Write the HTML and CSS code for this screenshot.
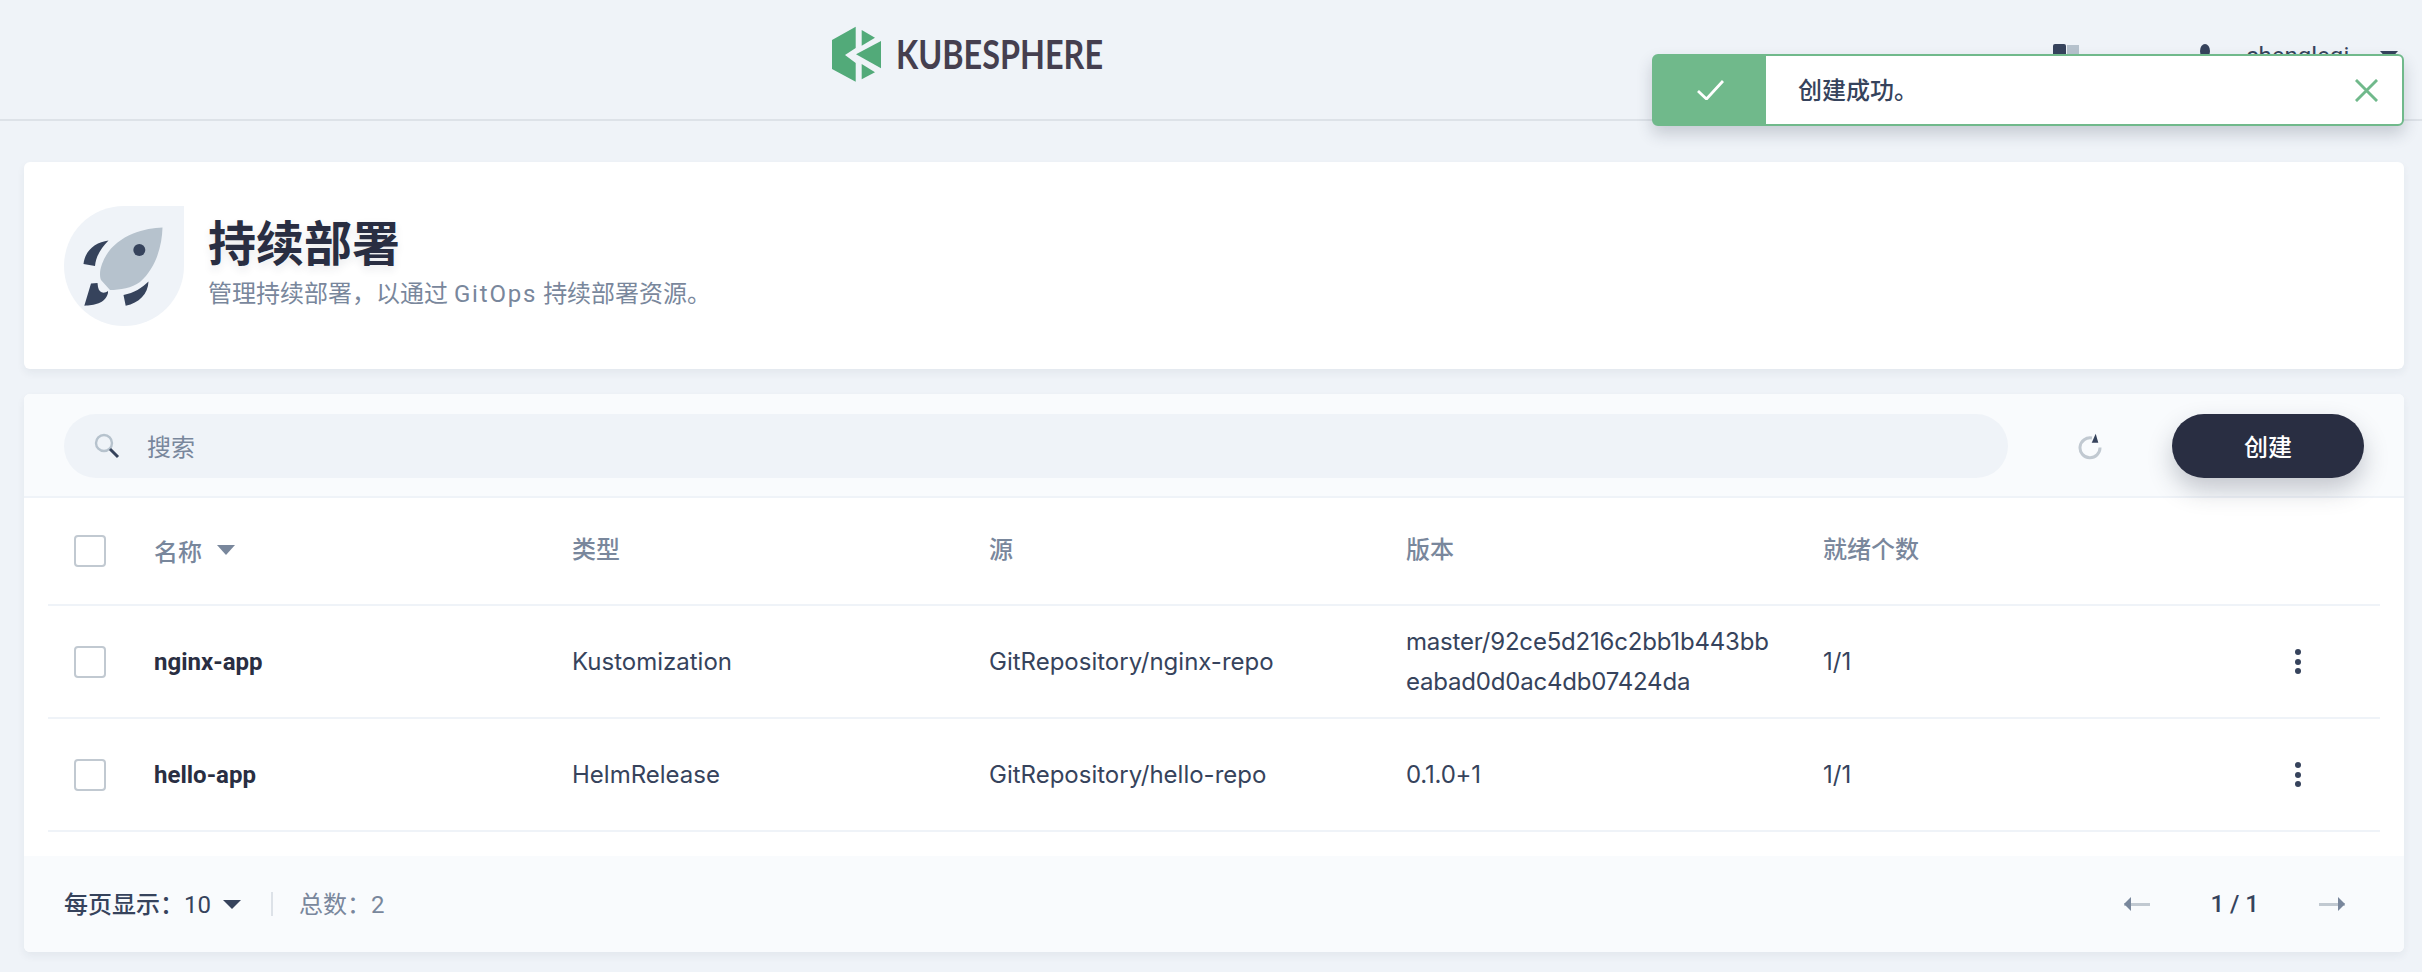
FILE: index.html
```html
<html>

<head>
  <title>KubeSphere</title>
  <meta name="viewport" content="width=device-width, initial-scale=1">
  <link rel="stylesheet" href="styles.css">
</head>

<body>
  <div class="header">
    <div class="logo">
      <svg class="logo-mark" viewBox="12 11 50 56" width="50" height="56">
        <polygon points="35.7,11.7 12,25 12,54 35.7,66.7 35.7,48 25,40 35.7,33" />
        <polygon points="41.7,15 55,22.7 41.7,30.7" />
        <polygon points="61,26 61,53.3 36,39.3" />
        <polygon points="41.7,49 55,57.3 41.7,64.3" />
      </svg>
      <span class="logo-text">KUBESPHERE</span>
    </div>
    <div class="header-right">
      <svg class="book-icon" viewBox="0 0 26 24" width="26" height="24">
        <rect x="0" y="0" width="13" height="24" rx="2" fill="#36435c" />
        <rect x="14" y="1" width="12" height="23" fill="#b6c2cd" />
      </svg>
      <svg class="user-icon" viewBox="0 0 12 24" width="12" height="24">
        <ellipse cx="6" cy="7" rx="5" ry="7" fill="#36435c" />
      </svg>
      <span class="username">chengleqi</span>
      <span class="caret caret-user"></span>
    </div>
  </div>

  <div class="toast">
    <div class="toast-icon">
      <svg viewBox="0 0 27 20" width="27" height="20">
        <path d="M1 11 L9.5 19 L26 1" fill="none" stroke="#fff" stroke-width="2.8" />
      </svg>
    </div>
    <div class="toast-text">创建成功。</div>
    <svg class="toast-close" viewBox="0 0 24 24" width="23" height="23">
      <path d="M1 1 L23 23 M23 1 L1 23" fill="none" stroke="#70b98b" stroke-width="3" />
    </svg>
  </div>

  <div class="main">
    <!-- Title card -->
    <div class="card banner">
      <div class="banner-icon">
        <svg viewBox="0 0 120 120" width="120" height="120">
          <path d="M98.5 21.5 C80 22 48 30 38 58 C35 66 36 72 37 74 L46 84 C56 84 68 82 76 76 C92 62 98 40 98.5 21.5 Z" fill="#b6c2cd" />
          <circle cx="75.3" cy="44" r="6" fill="#36435c" />
          <path d="M44.5 34.5 C32 36 21 44 19.5 58 L31 60 C32 50 37 42 44.5 34.5 Z" fill="#36435c" />
          <path d="M84.5 75.5 C78 82 70 87 59.5 89 L61.7 99.7 C75 97 84 88 84.5 75.5 Z" fill="#36435c" />
          <path d="M27 77.5 L20.3 99.7 C30 99 41 98 44 87 L44 85 C40 88 35 87 34 81 L33.5 77 Z" fill="#36435c" />
        </svg>
      </div>
      <div class="banner-text">
        <div class="banner-title">持续部署</div>
        <div class="banner-desc">管理持续部署，以通过 <span class="desc-latin">GitOps</span> 持续部署资源。</div>
      </div>
    </div>

    <!-- List card -->
    <div class="card list">
      <div class="toolbar">
        <div class="search">
          <svg viewBox="0 0 26 26" width="26" height="26">
            <circle cx="10" cy="10" r="8" fill="none" stroke="#b6c2cd" stroke-width="2.4" />
            <path d="M16 16 L24 24" stroke="#36435c" stroke-width="3" />
          </svg>
          <span class="search-text">搜索</span>
        </div>
        <svg class="refresh" viewBox="0 0 24 28" width="24" height="28">
          <path d="M14 6 A10 10 0 1 0 22 15.5" fill="none" stroke="#c1c9d1" stroke-width="3" />
          <path d="M13.7 10.7 L17.7 1.7 L20.3 10.7 Z" fill="#36435c" />
        </svg>
        <button class="button">创建</button>
      </div>

      <div class="row row-head">
        <div class="col-check"><span class="checkbox"></span></div>
        <div class="col-name">名称 <span class="caret caret-sort"></span></div>
        <div class="col">类型</div>
        <div class="col">源</div>
        <div class="col">版本</div>
        <div class="col">就绪个数</div>
      </div>

      <div class="row">
        <div class="col-check"><span class="checkbox"></span></div>
        <div class="col-name name">nginx-app</div>
        <div class="col">Kustomization</div>
        <div class="col">GitRepository/nginx-repo</div>
        <div class="col version">master/92ce5d216c2bb1b443bbeabad0d0ac4db07424da</div>
        <div class="col">1/1</div>
        <div class="dots"><i></i><i></i><i></i></div>
      </div>

      <div class="row">
        <div class="col-check"><span class="checkbox"></span></div>
        <div class="col-name name">hello-app</div>
        <div class="col">HelmRelease</div>
        <div class="col">GitRepository/hello-repo</div>
        <div class="col version">0.1.0+1</div>
        <div class="col">1/1</div>
        <div class="dots"><i></i><i></i><i></i></div>
      </div>

      <div class="footer">
        <span class="page-size">每页显示：<span class="page-size-num">10</span></span>
        <span class="caret caret-page"></span>
        <span class="sep"></span>
        <span class="total">总数：2</span>
        <div class="pager">
          <span class="arrow arrow-left"></span>
          <span class="page-num">1 / 1</span>
          <span class="arrow arrow-right"></span>
        </div>
      </div>
    </div>
  </div>
</body>

</html>
```

FILE: styles.css
```css
body {
  font-family: Roboto, "Noto Sans CJK SC", sans-serif;
  font-size: 24px;
  color: #292e42;
  background-color: #eff3f8;
  margin: 0;
  height: 972px;
  overflow: hidden;
}

.header {
  height: 119px;
  border-bottom: 2px solid #dde2e8;
  display: flex;
  align-items: flex-start;
  justify-content: space-between;
  padding: 0 24px 0 832px;
}

.logo {
  display: flex;
  align-items: center;
  gap: 14px;
  margin-top: 26px;
}

.logo-mark {
  fill: #52aa79;
}

.logo-text {
  font-family: Lato, sans-serif;
  font-size: 41px;
  font-weight: 700;
  line-height: 56px;
  color: #453f4f;
  transform: scaleX(0.79);
  transform-origin: left center;
}

.header-right {
  display: flex;
  align-items: center;
  margin-top: 42px;
}

.book-icon {
  margin-right: 120px;
}

.user-icon {
  margin-right: 35px;
}

.username {
  color: #36435c;
  width: 134px;
}

.caret {
  display: inline-block;
  width: 0;
  height: 0;
  border-style: solid;
  border-color: #36435c transparent transparent transparent;
}

.caret-user {
  border-width: 10px 9px 0 9px;
}

.toast {
  position: absolute;
  left: 1652px;
  top: 54px;
  width: 752px;
  height: 72px;
  box-sizing: border-box;
  border: 2px solid #70b98b;
  border-radius: 6px;
  background-color: #fff;
  display: flex;
  align-items: center;
  box-shadow: 0 8px 16px rgba(36, 46, 66, 0.2);
}

.toast-icon {
  width: 112px;
  height: 100%;
  background-color: #70b98b;
  display: flex;
  align-items: center;
  justify-content: center;
}

.toast-text {
  flex: 1;
  padding-left: 32px;
  margin-top: -3px;
  color: #36435c;
  font-weight: 500;
}

.toast-close {
  margin-right: 24px;
}

.main {
  padding: 41px 18px 0 24px;
}

.card {
  background-color: #fff;
  border-radius: 6px;
  box-shadow: 0 4px 8px rgba(36, 46, 66, 0.06);
}

.banner {
  height: 207px;
  display: flex;
  align-items: center;
  padding-left: 40px;
  gap: 24px;
  margin-bottom: 25px;
}

.banner-icon {
  width: 120px;
  height: 120px;
  background-color: #eff3f8;
  border-radius: 50% 0 50% 50%;
}

.banner-text {
  margin-bottom: 10px;
}

.banner-title {
  font-size: 48px;
  font-weight: 700;
  line-height: 66px;
  margin-bottom: 1px;
  text-shadow: 0 4px 8px rgba(36, 46, 66, 0.1);
}

.banner-desc {
  line-height: 30px;
  color: #79879c;
}

.desc-latin {
  letter-spacing: 1.8px;
}

.toolbar {
  height: 100px;
  padding: 2px 40px 0 40px;
  border-bottom: 2px solid #eff3f8;
  background-color: #f9fbfd;
  border-radius: 6px 6px 0 0;
  display: flex;
  align-items: center;
}

.search {
  flex: 1;
  height: 64px;
  background-color: #eff3f8;
  border-radius: 32px;
  display: flex;
  align-items: center;
  padding-left: 30px;
  gap: 27px;
  color: #79879c;
}

.search-text {
  padding-bottom: 2px;
}

.refresh {
  margin: 0 70px 0 70px;
}

.button {
  width: 192px;
  height: 64px;
  padding: 0 0 2px 0;
  border: none;
  border-radius: 32px;
  background-color: #292e42;
  color: #fff;
  font-family: inherit;
  font-size: 24px;
  font-weight: 500;
  box-shadow: 0 12px 24px rgba(41, 46, 66, 0.25);
}

.row {
  display: flex;
  align-items: center;
  height: 111px;
  margin: 0 24px;
  border-bottom: 2px solid #eff3f8;
}

.row-head {
  height: 106px;
  color: #79879c;
  font-weight: 500;
}

.row-head .col,
.row-head .col-name {
  padding-bottom: 2px;
}

.col-check {
  width: 106px;
  padding-left: 26px;
  box-sizing: border-box;
  display: flex;
}

.checkbox {
  width: 28px;
  height: 28px;
  border: 2px solid #c1c9d1;
  border-radius: 4px;
  background-color: #fff;
}

.col-name {
  width: 418px;
  display: flex;
  align-items: center;
  gap: 15px;
}

.name {
  font-weight: 700;
}

.col {
  width: 417px;
  font-family: Inter, "Noto Sans CJK SC", sans-serif;
  line-height: 40px;
  color: #36435c;
}

.row-head .col {
  color: #79879c;
}

.version {
  width: 368px;
  margin-right: 49px;
  letter-spacing: -0.2px;
  word-break: break-all;
}

.caret-sort {
  border-width: 10px 9px 0 9px;
  border-top-color: #79879c;
}

.dots {
  margin-left: auto;
  margin-right: 79px;
  display: flex;
  flex-direction: column;
  gap: 3.3px;
}

.dots i {
  width: 6px;
  height: 6px;
  border-radius: 50%;
  background-color: #36435c;
}

.footer {
  margin-top: 24px;
  height: 96px;
  background-color: #f9fbfd;
  border-radius: 0 0 6px 6px;
  display: flex;
  align-items: center;
  padding: 0 59px 0 40px;
}

.page-size {
  color: #36435c;
  font-weight: 500;
  margin-bottom: 3px;
}

.page-size-num {
  font-weight: 400;
}

.caret-page {
  border-width: 9px 9px 0 9px;
  margin-left: 12px;
}

.sep {
  width: 2px;
  height: 24px;
  background-color: #dde2e8;
  margin: 0 26px 0 30px;
}

.total {
  color: #79879c;
  margin-bottom: 3px;
}

.pager {
  margin-left: auto;
  display: flex;
  align-items: center;
}

.page-num {
  color: #36435c;
  font-weight: 500;
  margin: 0 60px;
}

.arrow {
  display: block;
  position: relative;
  width: 26px;
  height: 3px;
  background-color: #c1c9d1;
}

.arrow::before {
  content: "";
  position: absolute;
  top: -6px;
  border-style: solid;
  border-color: transparent;
  border-width: 7px 7px 7px 0;
}

.arrow-left::before {
  left: 0;
  border-right-color: #79879c;
}

.arrow-right::before {
  right: 0;
  border-width: 7px 0 7px 7px;
  border-left-color: #79879c;
}
```
